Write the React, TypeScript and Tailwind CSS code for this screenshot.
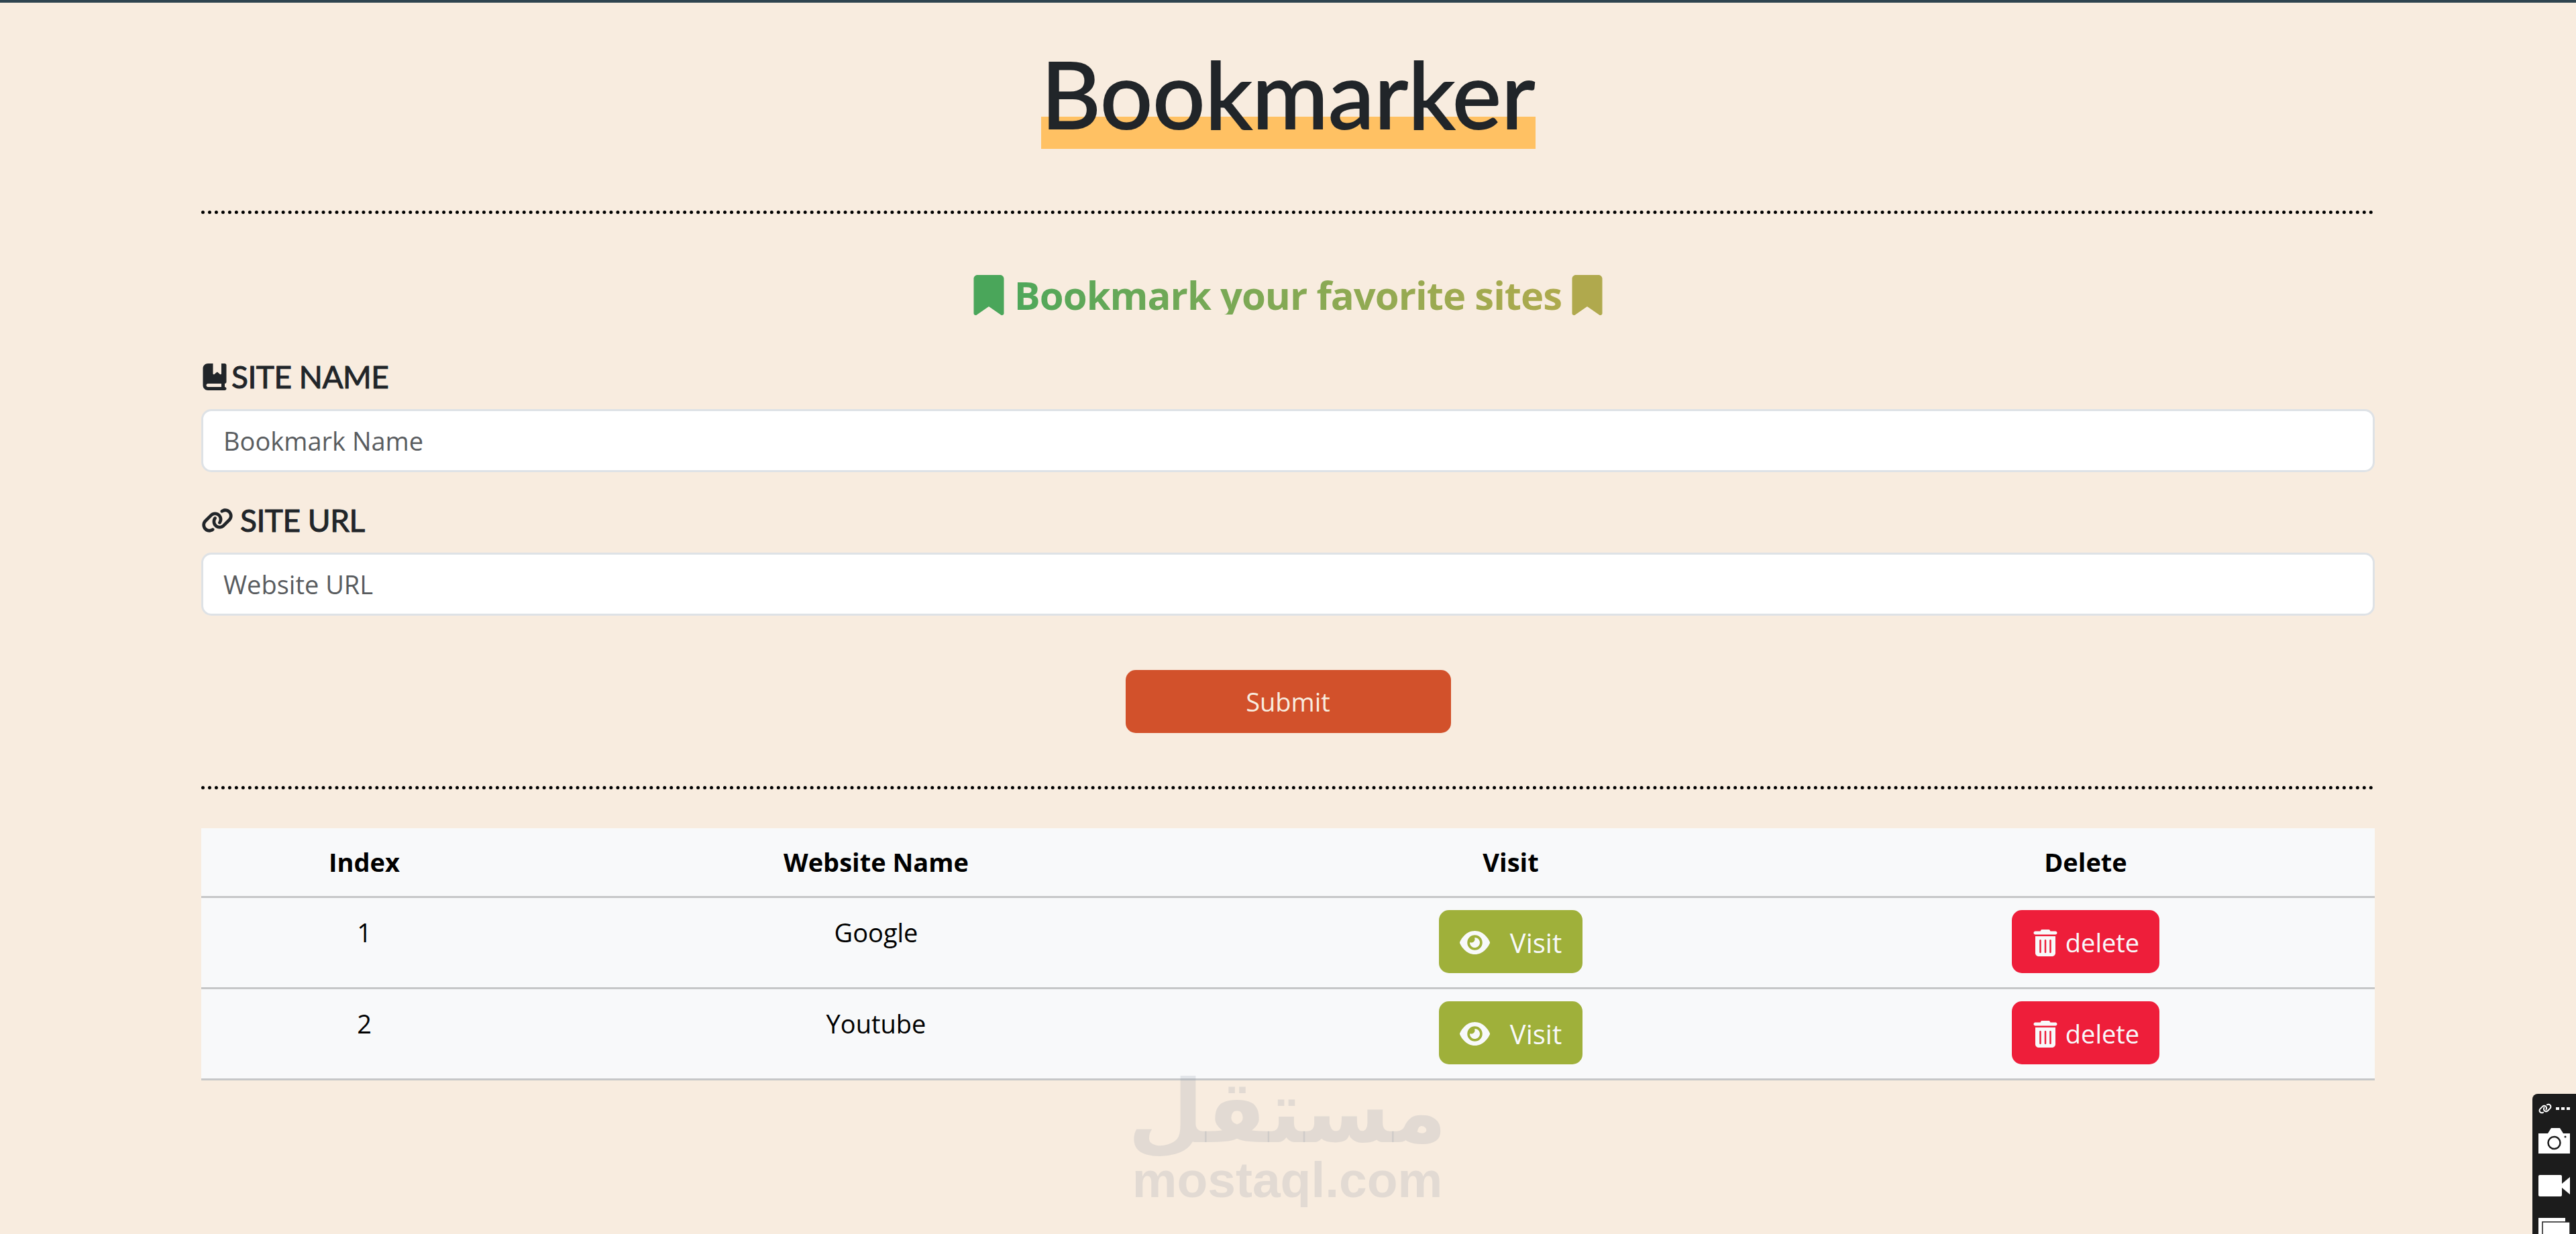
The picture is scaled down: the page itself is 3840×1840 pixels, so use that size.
import { FaBookBookmark, FaBookmark, FaEye, FaLink, FaTrashCan } from 'react-icons/fa6';

const sans = "font-['Open_Sans','Noto_Sans',sans-serif]";

const rows = [
  { id: 1, name: 'Google' },
  { id: 2, name: 'Youtube' },
];

function FieldLabel({ icon, text }: { icon: React.ReactNode; text: string }) {
  return (
    <label className="flex items-center gap-[10px] h-[44px] text-[#212529] text-[46px] leading-none tracking-[-0.5px] [-webkit-text-stroke:1px_#212529] font-['Lato',sans-serif]">
      {icon}
      <span>{text}</span>
    </label>
  );
}

function Field({ placeholder }: { placeholder: string }) {
  return (
    <input
      placeholder={placeholder}
      className={`block w-full h-[94px] mt-[26px] px-[30px] bg-white border-[3px] border-[#dee2e6] rounded-[15px] text-[38px] outline-none placeholder:text-[#595c5f] ${sans}`}
    />
  );
}

function Divider() {
  return <div className="border-t-[5px] border-dotted border-black" />;
}

function Toolbar() {
  return (
    <div className="absolute right-0 bottom-0 w-[65px] h-[209px] bg-[#1c1c1c] rounded-tl-[8px] overflow-hidden">
      <div className="flex items-center gap-[3px] pl-[9px] pt-[9px] h-[34px] text-white">
        <FaLink className="text-[20px] mr-[3px]" />
        <span className="w-[5px] h-[4px] bg-white" />
        <span className="w-[5px] h-[4px] bg-white" />
        <span className="w-[5px] h-[4px] bg-white" />
      </div>
      <svg viewBox="0 0 47 38" className="w-[47px] h-[38px] ml-[9px] mt-[17px]">
        <path fill="#fff" d="M0 8h14l5-8h13l5 8h10v30H0z" />
        <circle cx="23.5" cy="22" r="9" fill="none" stroke="#1c1c1c" strokeWidth="2.5" />
        <circle cx="40" cy="13" r="1.5" fill="#1c1c1c" />
      </svg>
      <svg viewBox="0 0 47 32" className="w-[47px] h-[32px] ml-[9px] mt-[32px]">
        <rect width="35" height="32" rx="2" fill="#fff" />
        <path fill="#fff" d="M35 13l12-10v26L35 19z" />
      </svg>
      <svg viewBox="0 0 47 30" className="w-[47px] h-[30px] ml-[9px] mt-[32px]">
        <path fill="#fff" d="M0 0h40v6H6v24H0z" />
        <rect x="6" y="6" width="41" height="24" fill="#fff" stroke="#1c1c1c" strokeWidth="1.5" />
      </svg>
    </div>
  );
}

export default function App() {
  return (
    <div className={`relative h-[1840px] overflow-hidden bg-[#f8ecdf] border-t-[4px] border-[#2f444f] ${sans}`}>
      <div className="w-[3240px] mx-auto">
        <header className="flex justify-center pt-[70px] h-[310px]">
          <h1 className="w-[737px] h-[148px] text-center text-[#212529] text-[138px] leading-[130px] [-webkit-text-stroke:2px_#212529] font-['Lato',sans-serif] bg-[linear-gradient(transparent_67.5%,#ffc163_67.5%)]">
            Bookmarker
          </h1>
        </header>
        <Divider />

        <h2 className="flex justify-center items-center gap-[8px] h-[60px] mt-[91px] text-[58px] tracking-[-1px] font-bold leading-none">
          <FaBookmark className="text-[#4aa65a] text-[60px]" />
          <span className="text-transparent bg-clip-text bg-gradient-to-r from-[#4ea75a] to-[#aeaa4d]">
            Bookmark your favorite sites
          </span>
          <FaBookmark className="text-[#b0a94d] text-[60px]" />
        </h2>

        <div className="mt-[70px]">
          <FieldLabel icon={<FaBookBookmark className="text-[40px] -mr-[5px]" />} text="SITE NAME" />
          <Field placeholder="Bookmark Name" />
        </div>
        <div className="mt-[50px]">
          <FieldLabel icon={<FaLink className="text-[48px]" />} text="SITE URL" />
          <Field placeholder="Website URL" />
        </div>

        <div className="flex justify-center mt-[81px]">
          <button className="w-[485px] h-[94px] bg-[#d2512b] text-[#f8ecdf] text-[38px] rounded-[15px]">Submit</button>
        </div>

        <div className="mt-[79px]">
          <Divider />
        </div>

        <table className="w-full mt-[58px] table-fixed border-collapse bg-[#f8f9fa] text-black text-[38px]">
          <colgroup>
            <col className="w-[486px]" />
            <col className="w-[1040px]" />
            <col className="w-[852px]" />
            <col className="w-[862px]" />
          </colgroup>
          <thead>
            <tr className="h-[102px] border-b-[3px] border-[#c6c7c8]">
              <th className="font-bold">Index</th>
              <th className="font-bold">Website Name</th>
              <th className="font-bold">Visit</th>
              <th className="font-bold">Delete</th>
            </tr>
          </thead>
          <tbody>
            {rows.map((row) => (
              <tr key={row.id} className="h-[136px] border-b-[3px] border-[#c6c7c8]">
                <td className="text-center align-top pt-[23px]">{row.id}</td>
                <td className="text-center align-top pt-[23px]">{row.name}</td>
                <td className="align-top pt-[18px]">
                  <button className="flex items-center justify-center gap-[30px] w-[214px] h-[94px] pt-[4px] mx-auto bg-[#9fb03a] text-[#f8f9fa] text-[40px] rounded-[15px]">
                    <FaEye className="text-[45px]" />
                    Visit
                  </button>
                </td>
                <td className="align-top pt-[18px]">
                  <button className="flex items-center justify-center gap-[10px] w-[220px] h-[94px] pt-[4px] mx-auto bg-[#ee1e3a] text-[#f8f9fa] rounded-[15px]">
                    <FaTrashCan className="text-[40px]" />
                    delete
                  </button>
                </td>
              </tr>
            ))}
          </tbody>
        </table>
      </div>

      {/* mostaql watermark */}
      <div className="absolute left-[1689px] top-[1591px] w-[460px] flex flex-col items-center text-[#8a97a3]/20 pointer-events-none">
        <span className="text-[130px] leading-[126px] font-bold font-['DejaVu_Sans',sans-serif]">مستقل</span>
        <span className="text-[75px] leading-[76px] font-bold font-['Liberation_Sans',sans-serif]">mostaql.com</span>
      </div>

      <Toolbar />
    </div>
  );
}
